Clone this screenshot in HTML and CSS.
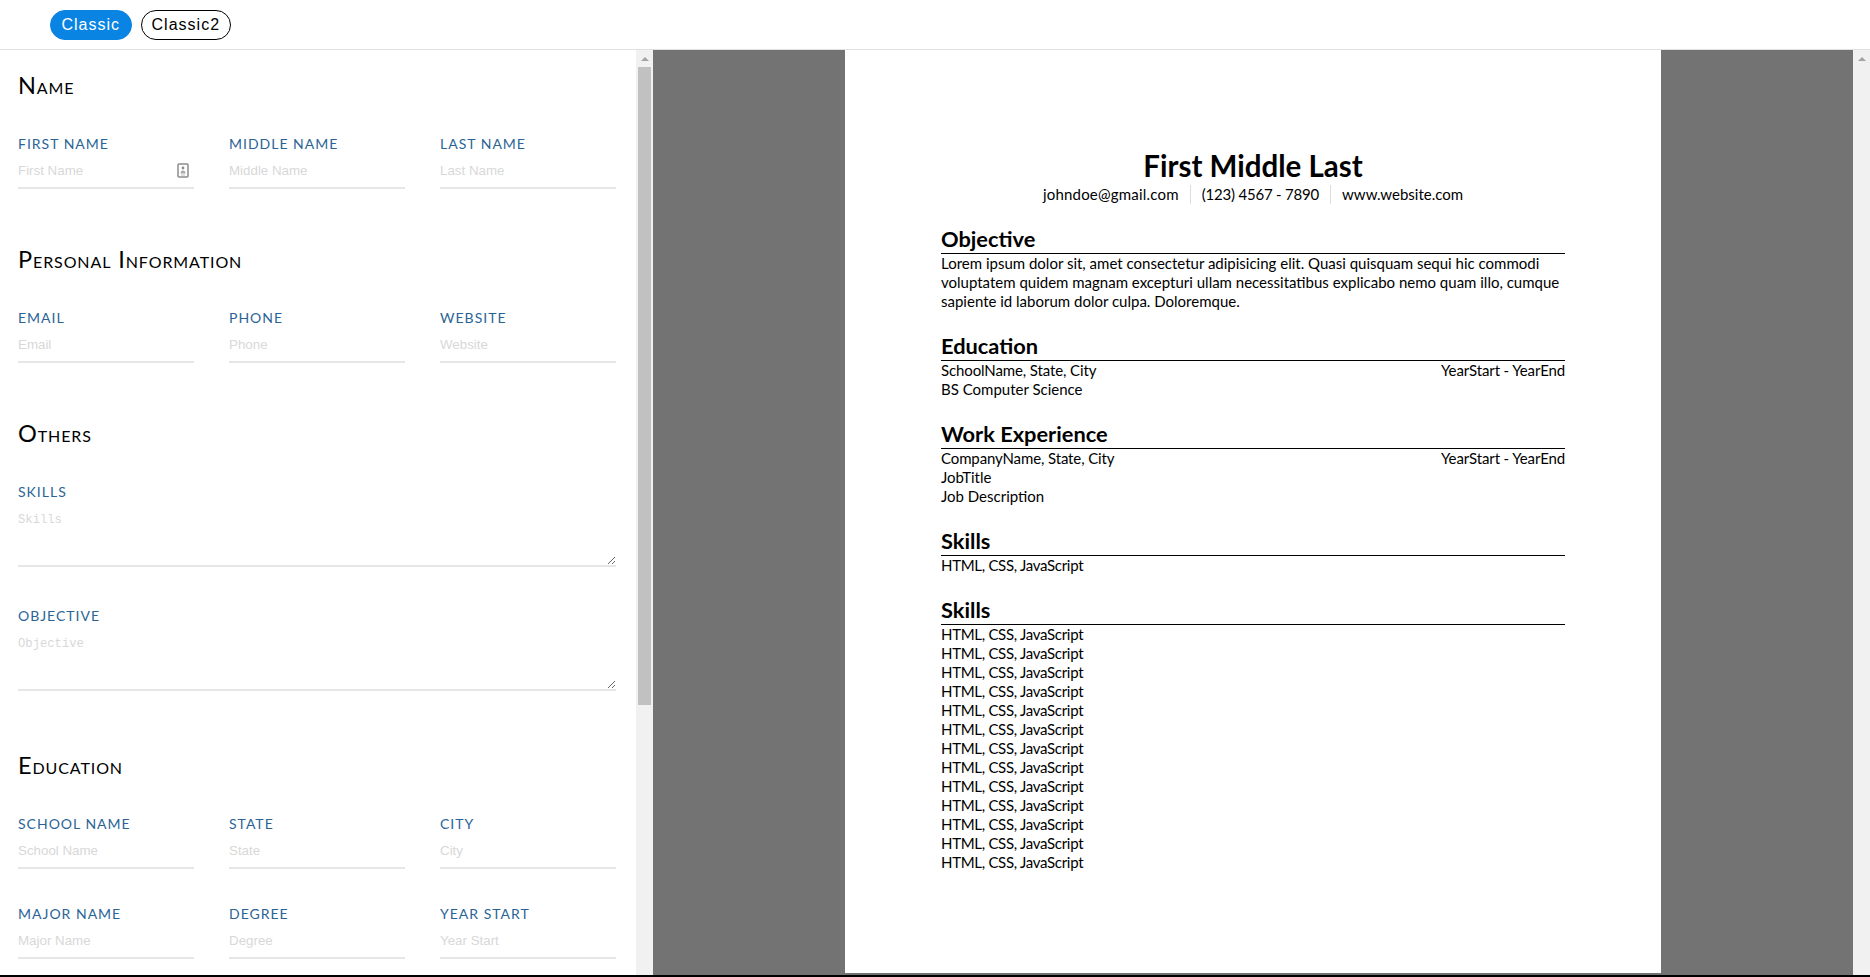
FILE: index.html
```html
<!DOCTYPE html>
<html lang="en">
<head>
<meta charset="utf-8">
<title>Resume Builder</title>
<link rel="stylesheet" href="styles.css">
</head>
<body>
<nav class="topbar">
  <button class="pill pill-active">Classic</button>
  <button class="pill">Classic2</button>
</nav>
<main class="workspace">
  <form class="editor">
    <section class="group">
      <h2 class="group-title">Name</h2>
      <div class="fields">
        <label class="field"><span class="field-label">First Name</span>
          <span class="input-wrap"><input class="input" placeholder="First Name">
            <svg class="autofill" viewBox="0 0 12 15" width="12" height="15" aria-hidden="true"><rect x="1" y="1" width="10" height="13" rx="1" fill="none" stroke="#8c8c8c" stroke-width="1.5"/><circle cx="6" cy="5" r="1.4" fill="#8c8c8c"/><path d="M3.5 10.5c0-2 1-3 2.5-3s2.5 1 2.5 3z" fill="#a8a8a8"/><path d="M4 12h4" stroke="#bdbdbd"/></svg>
          </span></label>
        <label class="field"><span class="field-label">Middle Name</span><input class="input" placeholder="Middle Name"></label>
        <label class="field"><span class="field-label">Last Name</span><input class="input" placeholder="Last Name"></label>
      </div>
    </section>
    <section class="group">
      <h2 class="group-title">Personal Information</h2>
      <div class="fields">
        <label class="field"><span class="field-label">Email</span><input class="input" placeholder="Email"></label>
        <label class="field"><span class="field-label">Phone</span><input class="input" placeholder="Phone"></label>
        <label class="field"><span class="field-label">Website</span><input class="input" placeholder="Website"></label>
      </div>
    </section>
    <section class="group group-wide">
      <h2 class="group-title">Others</h2>
      <div class="stack">
        <label class="field"><span class="field-label">Skills</span><textarea class="area" placeholder="Skills"></textarea></label>
        <label class="field"><span class="field-label">Objective</span><textarea class="area" placeholder="Objective"></textarea></label>
      </div>
    </section>
    <section class="group">
      <h2 class="group-title">Education</h2>
      <div class="fields">
        <label class="field"><span class="field-label">School Name</span><input class="input" placeholder="School Name"></label>
        <label class="field"><span class="field-label">State</span><input class="input" placeholder="State"></label>
        <label class="field"><span class="field-label">City</span><input class="input" placeholder="City"></label>
        <label class="field"><span class="field-label">Major Name</span><input class="input" placeholder="Major Name"></label>
        <label class="field"><span class="field-label">Degree</span><input class="input" placeholder="Degree"></label>
        <label class="field"><span class="field-label">Year Start</span><input class="input" placeholder="Year Start"></label>
      </div>
    </section>
  </form>
  <div class="scrollbar" aria-hidden="true"><div class="scroll-up"></div><div class="scroll-thumb"></div></div>
  <div class="preview">
    <article class="sheet">
      <h1 class="person">First Middle Last</h1>
      <p class="contact"><span class="contact-item contact-email">johndoe@gmail.com</span><span class="contact-item contact-phone">(123) 4567 - 7890</span><span class="contact-item">www.website.com</span></p>
      <section class="block">
        <h3 class="block-title">Objective</h3>
        <p class="text">Lorem ipsum dolor sit, amet consectetur adipisicing elit. Quasi quisquam sequi hic commodi voluptatem quidem magnam excepturi ullam necessitatibus explicabo nemo quam illo, cumque sapiente id laborum dolor culpa. Doloremque.</p>
      </section>
      <section class="block">
        <h3 class="block-title">Education</h3>
        <div class="split"><span>SchoolName, State, City</span><span>YearStart - YearEnd</span></div>
        <p class="text">BS Computer Science</p>
      </section>
      <section class="block">
        <h3 class="block-title">Work Experience</h3>
        <div class="split"><span>CompanyName, State, City</span><span>YearStart - YearEnd</span></div>
        <p class="text">JobTitle</p>
        <p class="text">Job Description</p>
      </section>
      <section class="block">
        <h3 class="block-title">Skills</h3>
        <p class="text skill">HTML, CSS, JavaScript</p>
      </section>
      <section class="block">
        <h3 class="block-title">Skills</h3>
        <p class="text skill">HTML, CSS, JavaScript</p>
        <p class="text skill">HTML, CSS, JavaScript</p>
        <p class="text skill">HTML, CSS, JavaScript</p>
        <p class="text skill">HTML, CSS, JavaScript</p>
        <p class="text skill">HTML, CSS, JavaScript</p>
        <p class="text skill">HTML, CSS, JavaScript</p>
        <p class="text skill">HTML, CSS, JavaScript</p>
        <p class="text skill">HTML, CSS, JavaScript</p>
        <p class="text skill">HTML, CSS, JavaScript</p>
        <p class="text skill">HTML, CSS, JavaScript</p>
        <p class="text skill">HTML, CSS, JavaScript</p>
        <p class="text skill">HTML, CSS, JavaScript</p>
        <p class="text skill">HTML, CSS, JavaScript</p>
      </section>
    </article>
  </div>
  <div class="scrollbar" aria-hidden="true"><div class="scroll-up"></div></div>
</main>
</body>
</html>
```
FILE: styles.css
```css
* { box-sizing: border-box; }
html, body { height: 100%; margin: 0; }
body {
  display: flex;
  flex-direction: column;
  overflow: hidden;
  background: #fff;
  border-bottom: 2px solid #000;
  font-family: Lato, "Liberation Sans", sans-serif;
  color: #000;
}

.topbar {
  flex: none;
  display: flex;
  align-items: center;
  gap: 9px;
  height: 50px;
  padding: 0 50px 0;
  border-bottom: 1px solid #e0e0e0;
}
.pill {
  height: 30px;
  padding: 0 10px;
  border: 1px solid #000;
  border-radius: 15px;
  background: #fff;
  color: #000;
  font: 16px "Liberation Sans", Arial, sans-serif;
  letter-spacing: 1px;
}
.pill-active {
  padding: 0 10.5px;
  border-color: #0984e3;
  background: #0984e3;
  color: #fff;
}

.workspace {
  flex: 1;
  min-height: 0;
  display: flex;
}

.editor {
  flex: none;
  width: 636px;
  overflow: hidden;
  padding: 20px 20px 0 18px;
}
.preview {
  flex: 1;
  min-width: 0;
  display: flex;
  justify-content: center;
  align-items: flex-start;
  background: #737373;
}

.scrollbar {
  flex: none;
  width: 17px;
  background: #f1f1f1;
}
.scroll-up {
  width: 0;
  height: 0;
  margin: 7px auto 6px;
  border-left: 4px solid transparent;
  border-right: 4px solid transparent;
  border-bottom: 4px solid #a3a3a3;
}
.scroll-thumb {
  height: 638px;
  margin: 0 2px;
  background: #c1c1c1;
}

.group { margin-bottom: 55px; }
.group-wide { margin-bottom: 59px; }
.group-title {
  margin: 0 0 34px;
  font-size: 23.5px;
  line-height: 30px;
  font-weight: 400;
  font-variant: small-caps;
  letter-spacing: 0.9px;
}
.fields {
  display: grid;
  grid-template-columns: repeat(3, 176px);
  column-gap: 35px;
  row-gap: 35px;
}
.stack {
  display: grid;
  row-gap: 39px;
}
.field { display: block; }
.field-label {
  display: block;
  height: 20px;
  font-size: 14px;
  line-height: 20px;
  letter-spacing: 1px;
  text-transform: uppercase;
  color: #2a6496;
}
.input-wrap { display: block; position: relative; }
.input, .area {
  display: block;
  width: 100%;
  padding: 0;
  border: 0;
  border-bottom: 2px solid #e6e6e6;
  outline: 0;
  background: transparent;
}
.input {
  height: 35px;
  font: 13.33px "Liberation Sans", Arial, sans-serif;
}
.area {
  height: 65px;
  padding-top: 11px;
  resize: vertical;
  font: 12.2px "Liberation Mono", monospace;
}
.input::placeholder, .area::placeholder { color: #d8d8d8; }
.autofill {
  position: absolute;
  top: 9px;
  right: 5px;
}

.sheet {
  flex: none;
  width: 816px;
  height: 923px;
  padding: 96px 96px 0;
  background: #fff;
  font-size: 15px;
  line-height: 19px;
}
.person {
  margin: 0;
  text-align: center;
  font-size: 29.5px;
  line-height: 39px;
  font-weight: 700;
}
.contact {
  display: flex;
  justify-content: center;
  margin: 0;
}
.contact-item { padding: 0 11px; }
.contact-item + .contact-item { border-left: 1px solid #ddd; }
.contact-email { letter-spacing: 0.2px; }
.contact-phone { letter-spacing: -0.2px; }
.block { margin-top: 25px; }
.block-title {
  margin: 0;
  padding-bottom: 4px;
  border-bottom: 1px solid #000;
  font-size: 21.8px;
  line-height: 20px;
  font-weight: 700;
}
.text { margin: 0; }
.skill { letter-spacing: -0.3px; }
.split {
  display: flex;
  justify-content: space-between;
  letter-spacing: -0.12px;
}
```
